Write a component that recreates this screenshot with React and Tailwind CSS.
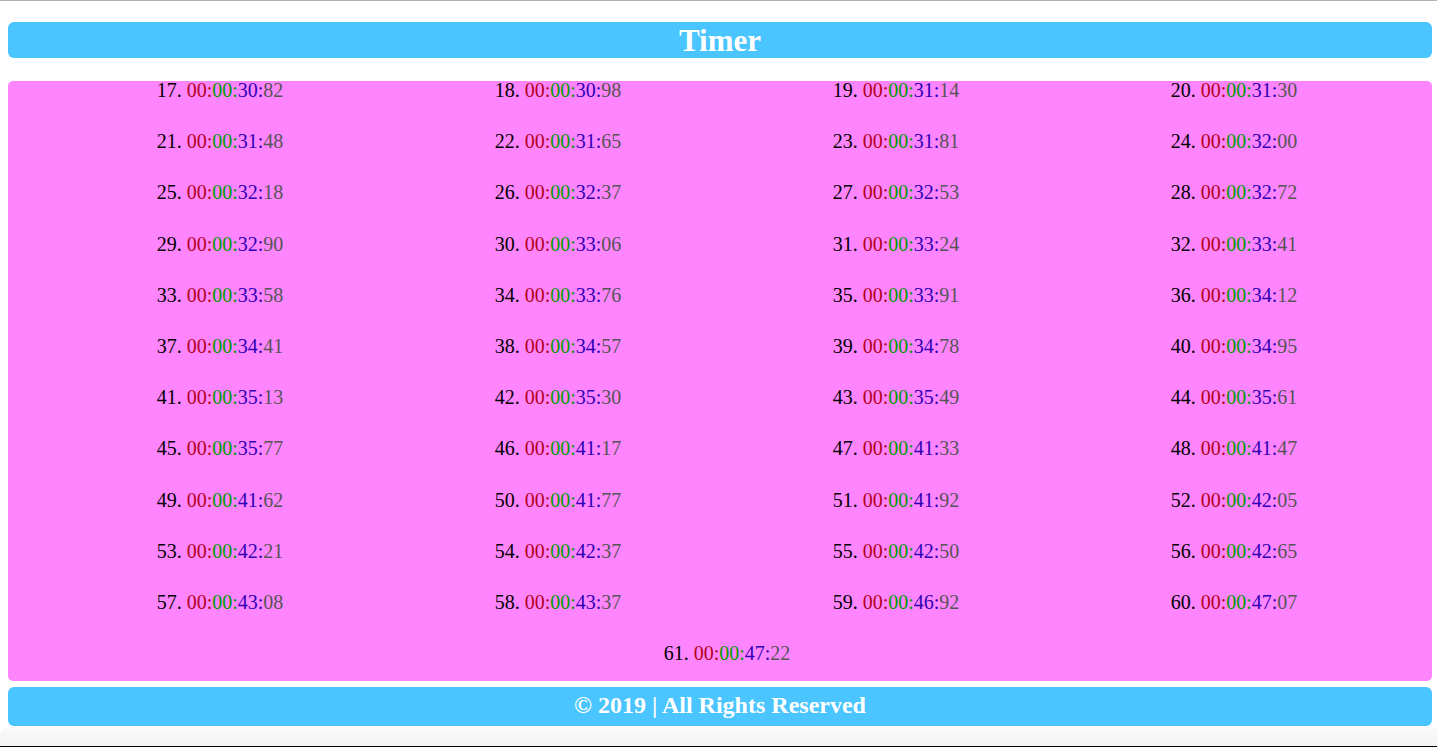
import React from "react";

const laps = [
  [17, "30", "82"], [18, "30", "98"], [19, "31", "14"], [20, "31", "30"],
  [21, "31", "48"], [22, "31", "65"], [23, "31", "81"], [24, "32", "00"],
  [25, "32", "18"], [26, "32", "37"], [27, "32", "53"], [28, "32", "72"],
  [29, "32", "90"], [30, "33", "06"], [31, "33", "24"], [32, "33", "41"],
  [33, "33", "58"], [34, "33", "76"], [35, "33", "91"], [36, "34", "12"],
  [37, "34", "41"], [38, "34", "57"], [39, "34", "78"], [40, "34", "95"],
  [41, "35", "13"], [42, "35", "30"], [43, "35", "49"], [44, "35", "61"],
  [45, "35", "77"], [46, "41", "17"], [47, "41", "33"], [48, "41", "47"],
  [49, "41", "62"], [50, "41", "77"], [51, "41", "92"], [52, "42", "05"],
  [53, "42", "21"], [54, "42", "37"], [55, "42", "50"], [56, "42", "65"],
  [57, "43", "08"], [58, "43", "37"], [59, "46", "92"], [60, "47", "07"],
  [61, "47", "22"]
];

const Lap = ({ n, sec, ms }) => (
  <div className="w-[338px] h-[20px] leading-[20px] text-center whitespace-nowrap">
    <span className="text-black">{n}. </span>
    <span className="text-[#b4001c]">00:</span>
    <span className="text-[#009a00]">00:</span>
    <span className="text-[#3000b4]">{sec}:</span>
    <span className="text-[#555555]">{ms}</span>
  </div>
);

export default function App() {
  return (
    <div
      className="h-[747px] bg-white border-t border-[#b3b3b3] flex flex-col overflow-hidden"
      style={{ fontFamily: '"Liberation Serif", "Times New Roman", serif' }}
    >
      {/* Header */}
      <div className="ml-[8px] w-[1424px] mt-[21px] h-[36px] rounded-[6px] bg-[#4ac5ff] flex items-center justify-center">
        <h1 className="text-white font-bold text-[31px] leading-none">Timer</h1>
      </div>

      {/* Laps */}
      <div className="ml-[8px] w-[1424px] mt-[23px] rounded-[5px] bg-[#ff85ff] pl-[43px] pr-[29px] pb-[18px] text-[20px]">
        <div className="-mt-px flex flex-wrap justify-center gap-y-[31.2px]">
          {laps.map(([n, sec, ms]) => (
            <Lap key={n} n={n} sec={sec} ms={ms} />
          ))}
        </div>
      </div>

      {/* Footer */}
      <div className="ml-[8px] w-[1424px] mt-[6px] h-[39px] pb-[4px] rounded-[6px] bg-[#4ac5ff] flex items-center justify-center">
        <p className="text-white font-bold text-[24px] leading-none">© 2019 | All Rights Reserved</p>
      </div>

      <div className="flex-1 mt-px bg-gradient-to-b from-[#fafafa] to-[#f2f2f2] border-b border-black rounded-tl-[10px]" />
    </div>
  );
}
